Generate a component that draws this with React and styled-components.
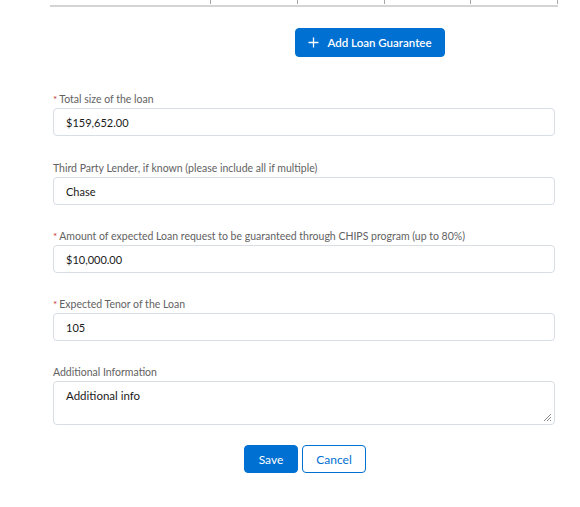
import React from "react";
import styled, { createGlobalStyle } from "styled-components";

const Global = createGlobalStyle`
  html, body { margin: 0; padding: 0; background: #fff; }
  body { font-family: Lato, "Open Sans", Arial, sans-serif; color: #080707; }
  * { box-sizing: border-box; }
`;

const Page = styled.div`
  width: 580px;
  height: 507px;
  overflow: hidden;
  background: #fff;
`;

const TableEdge = styled.div`
  display: grid;
  grid-template-columns: 161px 87px 87px 86px 87px;
  margin-left: 50px;
  width: 508px;
  height: 7px;
  border-bottom: 2px solid #d4d4d4;
`;

const TableCell = styled.div`
  height: 4px;
  border-right: 1px solid #a8a8a8;
`;

const Form = styled.div`
  padding: 21px 25px 0 53px;
  display: flex;
  flex-direction: column;
`;

const AddRow = styled.div`
  display: flex;
  padding-left: 242px;
  margin-bottom: 35px;
`;

const BrandButton = styled.button`
  display: inline-flex;
  align-items: center;
  justify-content: center;
  gap: 8px;
  height: ${(p) => p.$h || 29}px;
  width: ${(p) => p.$w}px;
  padding: 0;
  border-radius: 4px;
  border: 1px solid #0070d2;
  background: ${(p) => (p.$neutral ? "#fff" : "#0070d2")};
  color: ${(p) => (p.$neutral ? "#0070d2" : "#fff")};
  font-family: Lato, "Open Sans", Arial, sans-serif;
  font-size: ${(p) => p.$fs || 12}px;
  font-weight: ${(p) => (p.$bold ? 600 : 400)};
  cursor: pointer;
`;

const Field = styled.div`
  display: flex;
  flex-direction: column;
  margin-bottom: ${(p) => p.$mb}px;
`;

const Label = styled.label`
  display: flex;
  align-items: baseline;
  height: 14px;
  margin-bottom: 2px;
  font-size: 10.5px;
  line-height: 14px;
  color: #626262;
`;

const Req = styled.abbr`
  color: #c23934;
  text-decoration: none;
  margin-right: 2px;
  font-size: 10px;
`;

const Input = styled.div`
  height: 28px;
  border: 1px solid #d8dde6;
  border-radius: 4px;
  padding: 0 12px;
  display: flex;
  align-items: center;
  font-size: 11px;
  color: #1a1a1a;
`;

const TextArea = styled.div`
  position: relative;
  height: 44px;
  border: 1px solid #d8dde6;
  border-radius: 4px;
  padding: 7px 12px;
  font-size: 11.5px;
  color: #1a1a1a;
  margin-bottom: 20px;
`;

const Grip = styled.svg`
  position: absolute;
  right: 2px;
  bottom: 2px;
`;

const Footer = styled.div`
  display: flex;
  justify-content: center;
  gap: 4px;
  padding-left: 2px;
`;

const Plus = () => (
  <svg width="11" height="11" viewBox="0 0 11 11">
    <path d="M5.5 0.5v10M0.5 5.5h10" stroke="#fff" strokeWidth="1.3" />
  </svg>
);

const fields = [
  { label: "Total size of the loan", req: true, value: "$159,652.00", mb: 25 },
  { label: "Third Party Lender, if known (please include all if multiple)", req: false, value: "Chase", mb: 24 },
  { label: "Amount of expected Loan request to be guaranteed through CHIPS program (up to 80%)", req: true, value: "$10,000.00", mb: 24 },
  { label: "Expected Tenor of the Loan", req: true, value: "105", mb: 24 },
];

export default function App() {
  return (
    <Page>
      <Global />
      <TableEdge>
        {[0, 1, 2, 3, 4].map((i) => (
          <TableCell key={i} />
        ))}
      </TableEdge>
      <Form>
        <AddRow>
          <BrandButton $w={150} $bold $fs={11.5}>
            <Plus />
            Add Loan Guarantee
          </BrandButton>
        </AddRow>
        {fields.map((f) => (
          <Field key={f.label} $mb={f.mb}>
            <Label>
              {f.req && <Req title="required">*</Req>}
              {f.label}
            </Label>
            <Input>{f.value}</Input>
          </Field>
        ))}
        <Label>Additional Information</Label>
        <TextArea>
          Additional info
          <Grip width="9" height="9" viewBox="0 0 9 9">
            <path d="M8 1L1 8M8 4L4 8M8 7L7 8" stroke="#8a8a8a" strokeWidth="1" />
          </Grip>
        </TextArea>
        <Footer>
          <BrandButton $w={54} $h={28}>Save</BrandButton>
          <BrandButton $w={64} $h={28} $neutral>Cancel</BrandButton>
        </Footer>
      </Form>
    </Page>
  );
}
